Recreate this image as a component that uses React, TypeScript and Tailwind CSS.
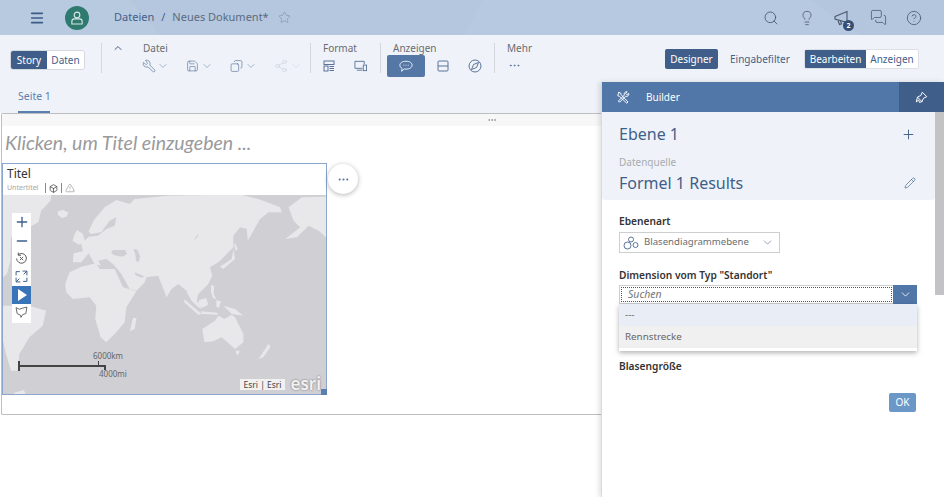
import React from 'react';
import {
  ChevronDown,
  ChevronUp,
  CircleHelp,
  Copy,
  Ellipsis,
  Lightbulb,
  Menu,
  MessagesSquare,
  Minus,
  Pencil,
  Plus,
  Save,
  Search,
  Share2,
  Star,
  Wrench,
  TriangleAlert,
  Box,
} from 'lucide-react';

const BuilderIcon = ({ className }: { className?: string }) => (
  <svg viewBox="0 0 16 16" className={className} fill="none" stroke="currentColor" strokeWidth="1.2">
    <path d="M2 1.5l2.5 1 .5 2 8.5 9-1.5 1.5-9-8.500-2-.5z" />
    <path d="M14.500 3a3 3 0 0 1-4 3.500L3.500 13.500a1.300 1.300 0 0 1-1.500-1.500l7-7a3 3 0 0 1 3.500-4L10.500 3l1.500 1.500z" />
  </svg>
);

const PaintIcon = ({ className }: { className?: string }) => (
  <svg viewBox="0 0 16 16" className={className} fill="none" stroke="currentColor" strokeWidth="1.2">
    <path d="M9 1.500l-1.800 4-4.200 2 5.500 5.500 2-4.200 4-1.800" />
    <path d="M3 7.500l-1.500 6 3-2.500 1 3 3.500-1" />
    <path d="M9 1.500l5.500 5.500" />
  </svg>
);

// drawn in the coordinates of a 3x crop of the map area
const MapView = () => (
  <svg viewBox="6 3 966 597" preserveAspectRatio="none" className="absolute inset-0 w-full h-full">
    <rect x="6" y="3" width="966" height="597" fill="#cfcfd4" />
    <g fill="#e8e8ea">
      <path d="M6 3L150 3 148 20 120 50 112 85 84 100 30 130 28 200 18 240 6 250z" />
      <path d="M170 52l16-4 16 8-6 12-14 4-12-10z" />
      <path d="M228 108l17 12 7 25-20 7-18-12 6-20z" />
      <path d="M215 205L217 178 245 172 240 150 262 128 290 125 315 105 340 95 345 70 325 80 300 115 268 120 262 112 278 78 310 40 345 18 385 30 400 15 500 5 620 3 720 3 770 15 835 40 840 55 800 55 775 75 755 110 738 140 735 105 715 100 695 125 695 160 670 185 650 205 625 220 632 245 620 270 600 290 590 300 585 320 600 345 590 340 570 320 558 300 555 290 530 270 510 285 495 310 480 270 470 245 435 250 430 265 405 290 385 285 360 240 335 210 315 195 290 200 300 215 280 210 262 178 240 205z" />
      <path d="M192 270L205 235 240 218 285 208 295 225 340 225 365 280 405 292 375 340 370 385 345 415 315 445 298 430 282 375 285 335 265 310 215 315 195 295z" />
      <path d="M395 372L405 372 400 405 385 412z" />
      <path d="M602 405L640 380 650 365 668 375 690 362 700 370 725 420 725 445 700 465 660 430 635 442 608 445z" />
      <path d="M702 470l12 0-4 12-6-2z" />
      <path d="M800 450L806 458 785 490 770 495z" />
      <path d="M695 165L700 195 665 225 655 218 690 195z" />
      <path d="M700 145l8 20-6 6-4-14z" />
      <path d="M6 335L85 335 135 350 125 395 85 430 55 480 50 530 30 530 15 480 6 440z" />
      <path d="M860 40L900 10 972 8 972 130 950 110 920 95 885 130 850 135 895 100 875 80z" />
      <path d="M548 315L600 360 590 362 548 325z" />
      <path d="M598 352l50 4 0 6-48-2z" />
      <path d="M592 318l22-6 6 20-20 10-10-12z" />
      <path d="M628 272l10 4-2 24 8 16-10-4-6-18z" />
      <path d="M644 318l14 4-6 20-8-4z" />
      <path d="M665 335L700 345 725 365 690 360z" />
      <path d="M40 596l28-8 6 12-36 0z" />
    </g>
    <g fill="#cfcfd4">
      <path d="M335 168l36 0 6 12-14 8-24-4-10-8z" />
      <path d="M396 165l12 2 8 20-4 18-8-4-2-18z" />
      <path d="M400 235l28 12-8 4-18-8z" />
      <path d="M578 135l10-14 2 2-10 14z" />
    </g>
  </svg>
);

const App = () => {
  return (
    <div className="w-[944px] h-[497px] overflow-hidden flex flex-col bg-white font-['Noto_Sans','Open_Sans',sans-serif]">
      {/* shell bar */}
      <header className="relative h-[35px] shrink-0 flex items-center bg-[#b4c7de] pl-[29px] pr-[22px]">
        <svg viewBox="0 0 944 35" className="absolute inset-0 w-full h-full pointer-events-none">
          <path d="M0 0H130L160 35H0z" fill="#b7cae0" />
          <path d="M483 0H944V35H465z" fill="#b7c9e0" />
          <path d="M810 0H944V35H860z" fill="#b3c6dd" />
        </svg>
        <Menu className="relative w-[16px] h-[16px] text-[#3c5b85]" strokeWidth={2.4} />
        <div className="relative ml-[20px] w-[24px] h-[24px] rounded-full bg-[#2f7a6f] flex items-center justify-center">
          <svg viewBox="0 0 14 16" className="w-[12px] h-[14px]" fill="none" stroke="#d7e5e6" strokeWidth="1.3">
            <circle cx="7" cy="4.500" r="3.300" />
            <path d="M1 15v-3a3 3 0 0 1 3-3h6a3 3 0 0 1 3 3v3z" />
          </svg>
        </div>
        <div className="relative ml-[25px] flex items-center text-[11px]">
          <span className="text-[#45608a]">Dateien</span>
          <span className="text-[#45608a] ml-[7px]">/</span>
          <span className="text-[#5c6b7d] ml-[7px]">Neues Dokument*</span>
          <Star className="ml-[9px] w-[13px] h-[13px] text-[#7d90aa]" strokeWidth={1.2} />
        </div>
        <div className="relative ml-auto flex items-center gap-[19.5px] text-[#48576b]">
          <Search className="w-[16px] h-[16px]" strokeWidth={1.3} />
          <Lightbulb className="w-[16px] h-[16px]" strokeWidth={1.2} />
          <div className="relative w-[16px] h-[16px]">
            <svg viewBox="0 0 16 16" className="w-[16px] h-[16px]" fill="none" stroke="currentColor" strokeWidth="1.1">
              <path d="M1 6.500l12-5v11l-12-3.500z" />
              <path d="M4 10.500l1.500 4 2-.7-1-3" />
            </svg>
            <span className="absolute -right-[4px] -bottom-[5px] w-[11px] h-[11px] rounded-full bg-[#354f74] text-white text-[7px] font-bold leading-[11px] text-center">
              2
            </span>
          </div>
          <MessagesSquare className="w-[17px] h-[17px]" strokeWidth={1.1} />
          <CircleHelp className="w-[16px] h-[16px]" strokeWidth={1.2} />
        </div>
      </header>

      {/* toolbar */}
      <div className="h-[47px] shrink-0 flex items-start bg-[#eff3f9] text-[10px] text-[#6a6d70]">
        <div className="ml-[10px] mt-[15px] w-[75px] h-[20px] flex rounded-[3px] border border-[#d5d9df] overflow-hidden">
          <span className="w-[36px] bg-[#3f5f8a] text-white text-center leading-[18px]">Story</span>
          <span className="flex-1 bg-white text-[#45608a] text-center leading-[18px]">Daten</span>
        </div>

        <div className="ml-[16px] mt-[8px] w-px h-[30px] bg-[#d4d8de]" />
        <ChevronUp className="ml-[10px] mt-[7px] w-[12px] h-[12px] text-[#3f5f8a]" strokeWidth={2} />
        <div className="ml-[18px] mt-[6px] w-[168px]">
          <div className="pl-px leading-[15px]">Datei</div>
          <div className="flex mt-[3px] text-[#5b7399]">
            <div className="w-[44px] flex items-center gap-px">
              <Wrench className="w-[14px] h-[14px] -scale-x-100" strokeWidth={1.2} />
              <ChevronDown className="w-[12px] h-[12px] text-[#7088aa]" strokeWidth={1.2} />
            </div>
            <div className="w-[44px] flex items-center gap-[2px]">
              <Save className="w-[13px] h-[14px]" strokeWidth={1.2} />
              <ChevronDown className="w-[12px] h-[12px] text-[#7088aa]" strokeWidth={1.2} />
            </div>
            <div className="w-[44px] flex items-center gap-[2px]">
              <Copy className="w-[13px] h-[14px] -scale-x-100" strokeWidth={1.2} />
              <ChevronDown className="w-[12px] h-[12px] text-[#7088aa]" strokeWidth={1.2} />
            </div>
            <div className="flex items-center gap-[2px] text-[#c9d3e1]">
              <Share2 className="w-[14px] h-[14px]" strokeWidth={1.2} />
              <ChevronDown className="w-[12px] h-[12px]" strokeWidth={1.2} />
            </div>
          </div>
        </div>

        <div className="mt-[8px] w-px h-[30px] bg-[#d4d8de]" />
        <div className="ml-[12px] mt-[6px] w-[57px]">
          <div className="leading-[15px]">Format</div>
          <div className="flex items-center h-[14px] mt-[3px] gap-[19px] text-[#5b7399]">
            <svg viewBox="0 0 12 12" className="w-[12px] h-[12px]" fill="none" stroke="currentColor">
              <rect x="1" y="1" width="10" height="3.500" />
              <rect x="1" y="6" width="4" height="5" />
              <path d="M6.500 6.500H11M6.500 8.500H11M6.500 10.500H11" />
            </svg>
            <svg viewBox="0 0 14 12" className="w-[13px] h-[12px]" fill="none" stroke="currentColor">
              <path d="M9 8.500H1V1h10v3M3 10.500h6" />
              <rect x="10" y="5" width="3.500" height="6" />
            </svg>
          </div>
        </div>

        <div className="mt-[8px] w-px h-[30px] bg-[#d4d8de]" />
        <div className="ml-[6px] mt-[6px] w-[107px]">
          <div className="ml-[6px] leading-[15px]">Anzeigen</div>
          <div className="flex items-center -mt-px text-[#5b7399]">
            <div className="w-[38px] h-[22px] rounded-[2px] bg-[#5477a6] flex items-center justify-center">
              <svg viewBox="0 0 16 14" className="w-[14px] h-[13px]" fill="none" stroke="white" strokeWidth="1">
                <path d="M8 1c4 0 7 1.800 7 4.500S12 10 8 10c-.7 0-1.300 0-2-.2L3 12.500l.5-3.300C2 8.300 1 7 1 5.500 1 2.800 4 1 8 1z" />
                <path d="M5 5.500h1M7.500 5.500h1M10 5.500h1" />
              </svg>
            </div>
            <svg viewBox="0 0 12 12" className="ml-[12px] w-[12px] h-[12px]" fill="none" stroke="currentColor">
              <rect x="1" y="1" width="10" height="10" rx="1" />
              <path d="M1 6h10" />
            </svg>
            <svg viewBox="0 0 14 14" className="ml-[19px] w-[14px] h-[14px]" fill="none" stroke="currentColor">
              <circle cx="7" cy="7" r="6" />
              <path d="M10.500 3.500L8.500 8.500 3.500 10.500 5.500 5.500z" />
            </svg>
          </div>
        </div>

        <div className="mt-[8px] w-px h-[30px] bg-[#d4d8de]" />
        <div className="ml-[12px] mt-[6px]">
          <div className="leading-[15px]">Mehr</div>
          <Ellipsis className="mt-[3px] ml-px w-[13px] h-[13px] text-[#5b7399]" strokeWidth={1.5} />
        </div>

        <div className="ml-auto mr-[25px] mt-[14px] flex items-center">
          <span className="w-[53px] h-[20px] rounded-[2px] bg-[#3f5f8a] text-white text-center leading-[20px]">Designer</span>
          <span className="ml-[12px] w-[58px] text-[#45608a] leading-[20px] whitespace-nowrap">Eingabefilter</span>
          <div className="ml-[16px] w-[115px] h-[20px] flex rounded-[2px] border border-[#dde1e7] overflow-hidden">
            <span className="w-[61px] bg-[#3f5f8a] text-white text-center leading-[18px]">Bearbeiten</span>
            <span className="flex-1 bg-white text-[#45608a] text-center leading-[18px]">Anzeigen</span>
          </div>
        </div>
      </div>

      {/* body */}
      <div className="flex-1 flex min-h-0">
        <main className="flex-1 flex flex-col min-w-0 relative">
          <div className="h-[31px] shrink-0 bg-[#eff3f9] pl-[18px] flex">
            <div className="w-[32px] h-full pt-[7px] border-b-2 border-[#5b7fb0] text-[10.5px] text-[#5b7fb0] whitespace-nowrap">Seite 1</div>
          </div>
          <section className="relative ml-px h-[302px] border border-r-0 border-[#bcbec2] rounded-l-[2px]">
            <div className="h-[12px] bg-[#f7f7f7] flex items-center justify-end pr-[101px]">
              <Ellipsis className="w-[16px] h-[10px] text-[#8a8d90]" strokeWidth={2} />
            </div>
            <div className="h-[37px] pl-[3px] pt-[3px] text-[19.5px] italic text-[#9a9a9c] leading-[28px] font-['Lato',sans-serif]">
              Klicken, um Titel einzugeben ...
            </div>
            <div className="relative w-[325px] h-[232px] border border-[#8aa6cc] flex flex-col">
              <div className="h-[31px] bg-white pl-[4px] pt-[2px] shrink-0">
                <div className="text-[12px] leading-[16px] text-[#333]">Titel</div>
                <div className="flex items-center h-[10px] mt-px">
                  <span className="text-[7px] text-[#a5a5a5] leading-[10px] w-[38px]">Untertitel</span>
                  <span className="w-px h-[10px] bg-[#888]" />
                  <Box className="w-[9px] h-[9px] mx-[3px] text-[#444]" strokeWidth={2} />
                  <span className="w-px h-[10px] bg-[#888]" />
                  <TriangleAlert className="w-[10px] h-[10px] ml-[3px] text-[#777]" strokeWidth={1.2} />
                </div>
              </div>
              <div className="relative flex-1">
                <MapView />
                <div className="absolute left-[9px] top-[18px] w-[19px] h-[110px] bg-white flex flex-col items-center text-[#3f5f8a]">
                  <Plus className="mt-[1px] w-[16px] h-[16px]" strokeWidth={2} />
                  <Minus className="mt-[3px] w-[16px] h-[16px]" strokeWidth={2} />
                  <svg viewBox="0 0 12 12" className="mt-[3px] w-[13px] h-[13px]" fill="none" stroke="#555" strokeWidth="0.9">
                    <path d="M3 2.500a4.500 4.500 0 1 1-1.500 3.500M3 .5v2.500h2.500M4.500 4.500l3 3M7.500 4.500l-3 3" />
                  </svg>
                  <svg viewBox="0 0 12 12" className="mt-[5px] w-[13px] h-[13px]" fill="none" stroke="#3f5f8a" strokeWidth="0.9">
                    <path d="M1 5V1.500h3.500M11 7v3.500H7.500M7 1h4v4M11 1L8 4M5 11H1V7M1 11l3-3" />
                  </svg>
                  <div className="mt-[3px] w-full h-[18px] bg-[#3a74b8] flex items-center justify-center">
                    <div className="w-0 h-0 border-y-[6px] border-y-transparent border-l-[9px] border-l-white ml-px" />
                  </div>
                  <svg viewBox="0 0 12 12" className="mt-[2px] w-[13px] h-[13px]" fill="none" stroke="#555" strokeWidth="0.8">
                    <path d="M1 1.500l3 1.500 3-1 4-1-1 6-3 1-1.500 2.500L5 8.500 2 7z" />
                  </svg>
                </div>
                <div className="absolute left-[90px] top-[156px] text-[8px] leading-[10px] text-[#666]">6000km</div>
                <div className="absolute left-[15px] top-[170px] w-[87px] h-[2px] bg-[#444]" />
                <div className="absolute left-[15px] top-[166px] w-[1.5px] h-[10px] bg-[#444]" />
                <div className="absolute left-[95px] top-[166px] w-px h-[5px] bg-[#444]" />
                <div className="absolute left-[101px] top-[170px] w-[1.5px] h-[5px] bg-[#444]" />
                <div className="absolute left-[96px] top-[174px] text-[8px] leading-[10px] text-[#666]">4000mi</div>
                <div className="absolute left-[237px] top-[184px] w-[45px] h-[11px] bg-[#f1f1f1] text-[8.5px] leading-[11px] text-center text-[#444]">
                  Esri | Esri
                </div>
                <div className="absolute right-[5px] bottom-[1px] text-[17px] font-semibold leading-[18px] text-[#f2f2f2] [text-shadow:0_0_2px_#666]">
                  esri
                </div>
              </div>
              <div className="absolute -right-[1px] -bottom-[1px] w-[6px] h-[6px] bg-[#5b7fb0]" />
              <div className="absolute left-[325px] top-0 w-[30px] h-[30px] rounded-full bg-white shadow-[0_1px_5px_rgba(0,0,0,0.3)] flex items-center justify-center">
                <Ellipsis className="w-[13px] h-[13px] text-[#5b7399]" strokeWidth={2} />
              </div>
            </div>
          </section>
        </main>

        {/* builder panel */}
        <aside className="relative w-[343px] shrink-0 flex flex-col bg-white border-l border-[#d8dade] shadow-[-2px_0_5px_rgba(0,0,0,0.12)]">
          <div className="h-[30px] shrink-0 flex items-center bg-[#5077a8] text-white">
            <BuilderIcon className="ml-[15px] w-[13px] h-[13px]" />
            <span className="ml-[16px] text-[10px]">Builder</span>
            <div className="ml-auto w-[45px] h-full bg-[#3f5f8a] flex items-center justify-center">
              <PaintIcon className="w-[13px] h-[13px]" />
            </div>
          </div>
          <div className="flex-1 flex min-h-0">
            <div className="flex-1 min-w-0">
              <div className="h-[88px] bg-[#eff3f9] rounded-b-[3px] pl-[17px] pr-[19px] text-[#3f5f8a]">
                <div className="h-[44px] flex items-center justify-between text-[16px]">
                  <span>Ebene 1</span>
                  <Plus className="w-[15px] h-[15px]" strokeWidth={1.5} />
                </div>
                <div className="text-[10px] leading-[12px] text-[#a8abb0]">Datenquelle</div>
                <div className="mt-[4px] flex items-center justify-between text-[16px] leading-[22px]">
                  <span>Formel 1 Results</span>
                  <Pencil className="w-[12px] h-[12px]" strokeWidth={1.3} />
                </div>
              </div>
              <div className="pl-[17px] pr-[18px]">
                <div className="mt-[14px] text-[10.2px] font-semibold leading-[14px] text-[#333]">Ebenenart</div>
                <div className="mt-[4px] w-[161px] h-[21px] flex items-center border border-[#ccced2] text-[9.6px] text-[#6a6d70]">
                  <svg viewBox="0 0 16 14" className="ml-[3px] w-[16px] h-[14px]" fill="none" stroke="#5b7399" strokeWidth="1">
                    <circle cx="4.500" cy="9.500" r="3.500" />
                    <circle cx="8" cy="3.500" r="2.500" />
                    <circle cx="12.500" cy="9" r="2.500" />
                  </svg>
                  <span className="ml-[5px]">Blasendiagrammebene</span>
                  <ChevronDown className="ml-auto mr-[5px] w-[13px] h-[13px] text-[#5b7399]" strokeWidth={1.2} />
                </div>
                <div className="mt-[15px] text-[10.2px] font-semibold leading-[14px] text-[#333]">Dimension vom Typ "Standort"</div>
                <div className="relative mt-[3px]">
                  <div className="h-[19px] flex border border-[#ccced2]">
                    <div className="flex-1 m-px border border-dotted border-[#555] pl-[6px] text-[10.5px] italic leading-[13px] text-[#777]">Suchen</div>
                    <div className="w-[24px] -my-px -mr-px bg-[#5077a8] flex items-center justify-center">
                      <ChevronDown className="w-[13px] h-[13px] text-white" strokeWidth={1.5} />
                    </div>
                  </div>
                  <div className="absolute left-0 right-0 top-[19px] h-[47px] bg-white shadow-[0_2px_5px_rgba(0,0,0,0.3)] text-[9.8px] text-[#666]">
                    <div className="h-[22px] bg-[#e9edf5] pl-[6px] leading-[22px]">---</div>
                    <div className="h-[22px] bg-[#f0f0f0] pl-[6px] leading-[22px]">Rennstrecke</div>
                  </div>
                </div>
                <div className="mt-[55px] text-[10.2px] font-semibold leading-[14px] text-[#333]">Blasengröße</div>
                <div className="mt-[20px] flex justify-end pr-px">
                  <button className="w-[27px] h-[19px] rounded-[2px] bg-[#6c98c8] text-white text-[10px]">OK</button>
                </div>
              </div>
            </div>
            <div className="w-[9px] shrink-0 self-start h-[183px] bg-[#c3c3c5]" />
          </div>
        </aside>
      </div>
    </div>
  );
};

export default App;
